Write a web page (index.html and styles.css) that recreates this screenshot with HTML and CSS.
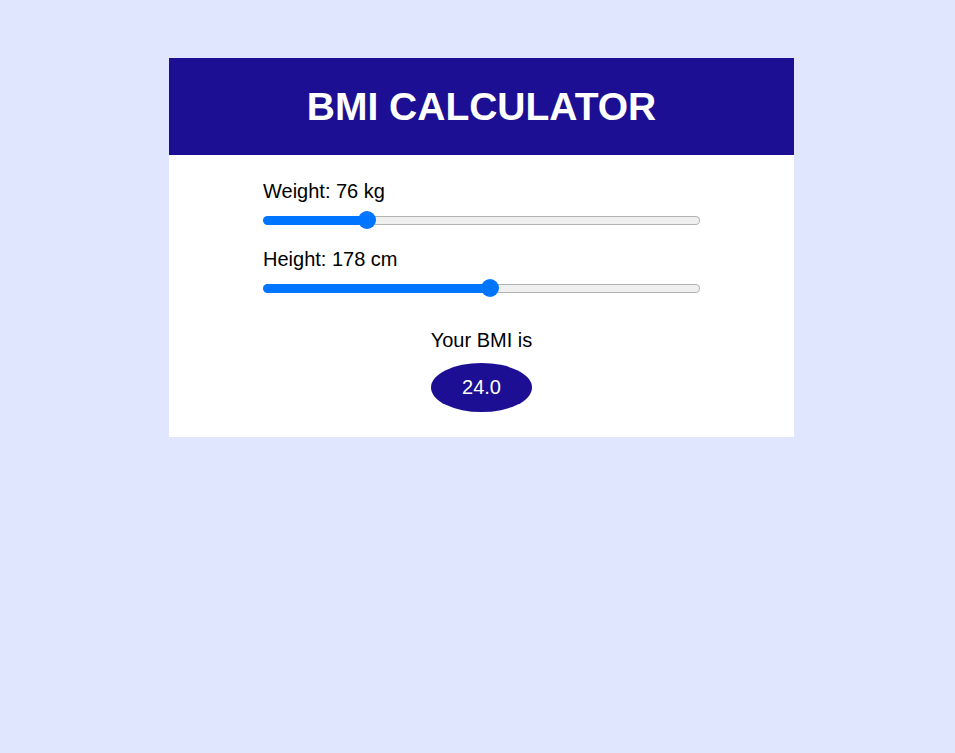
FILE: index.html
```html
<!DOCTYPE html>
<html lang="en">
<head>
<meta charset="utf-8">
<title>BMI Calculator</title>
<link rel="stylesheet" href="styles.css">
</head>
<body>
<div class="page">
  <main class="card">
    <header class="card-header">
      <h1 class="title">BMI CALCULATOR</h1>
    </header>
    <section class="card-body">
      <div class="field">
        <label class="field-label" for="weight">Weight: 76 kg</label>
        <input class="slider" id="weight" type="range" min="40" max="200" value="76" style="--fill: 23.8%">
      </div>
      <div class="field">
        <label class="field-label" for="height">Height: 178 cm</label>
        <input class="slider" id="height" type="range" min="100" max="250" value="178" style="--fill: 52%">
      </div>
      <div class="result">
        <p class="result-label">Your BMI is</p>
        <div class="result-value">24.0</div>
      </div>
    </section>
  </main>
</div>
</body>
</html>
```
FILE: styles.css
```css
html, body {
  margin: 0;
  padding: 0;
}
body {
  background: #dfe6fe;
  font-family: "Liberation Sans", Arial, sans-serif;
  color: #000;
  min-height: 753px;
}
.page {
  padding: 58px 0 0 169px;
}
.card {
  width: 625px;
  background: #ffffff;
}
.card-header {
  background: #1c0f93;
  height: 97px;
  display: flex;
  align-items: center;
  justify-content: center;
}
.title {
  margin: 0;
  color: #ffffff;
  font-size: 39px;
  font-weight: bold;
  line-height: 45px;
}
.card-body {
  padding: 25px 0 25px;
  display: flex;
  flex-direction: column;
  align-items: center;
}
.field {
  width: 437px;
  display: flex;
  flex-direction: column;
  margin-bottom: 19px;
}
.field-label {
  font-size: 20px;
  line-height: 23px;
}
.slider {
  -webkit-appearance: none;
  appearance: none;
  display: block;
  width: 437px;
  height: 18px;
  margin: 8px 0 0;
  padding: 0;
  background: transparent;
}
.slider::-webkit-slider-runnable-track {
  box-sizing: border-box;
  height: 9px;
  border: 1px solid transparent;
  border-radius: 5px;
  background:
    linear-gradient(#0075ff, #0075ff) 0 0 / var(--fill) 100% no-repeat border-box,
    linear-gradient(#efefef, #efefef) padding-box,
    linear-gradient(#b2b2b2, #b2b2b2) border-box;
}
.slider::-webkit-slider-thumb {
  -webkit-appearance: none;
  appearance: none;
  width: 18px;
  height: 18px;
  margin-top: -5.5px;
  border: none;
  border-radius: 50%;
  background: #0075ff;
}
.result {
  display: flex;
  flex-direction: column;
  align-items: center;
  margin-top: 13px;
}
.result-label {
  margin: 0;
  font-size: 20px;
  line-height: 23px;
}
.result-value {
  margin-top: 11px;
  width: 101px;
  height: 49px;
  border-radius: 50%;
  background: #1c0f93;
  color: #ffffff;
  font-size: 20px;
  display: flex;
  align-items: center;
  justify-content: center;
}
```
